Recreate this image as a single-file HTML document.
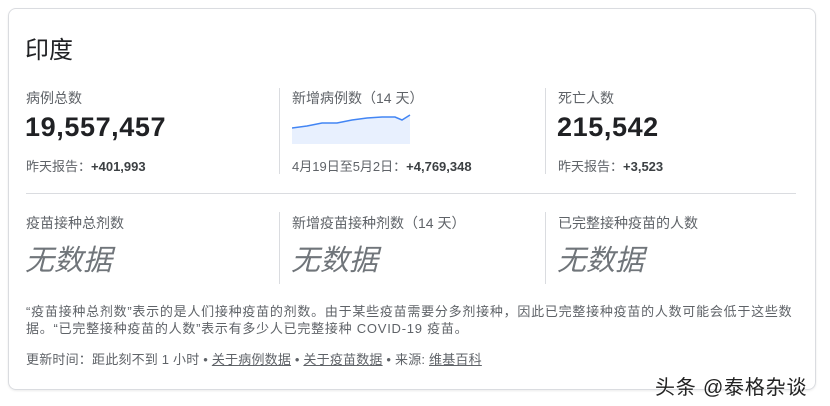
<!DOCTYPE html>
<html><head><meta charset="utf-8"><style>
body{margin:0;width:830px;height:406px;background:#fff;font-family:"Liberation Sans","Noto Sans CJK SC",sans-serif;position:relative;overflow:hidden;color:#202124}
.card{position:absolute;left:8px;top:8px;width:806px;height:380px;border:1px solid #dadce0;border-radius:8px;box-shadow:0 1px 2px rgba(0,0,0,.08)}
.a{position:absolute;white-space:nowrap}
.lab{font-size:14px;color:#5f6368}
.big{font-size:27px;font-weight:700;color:#202124;letter-spacing:0.6px}
.sub{font-size:13px;color:#5f6368}
.sub b{color:#3c4043}
.nd{font-size:29px;font-style:italic;color:#70757a}
.vl{position:absolute;width:1px;background:#dadce0}
.note{font-size:13px;color:#5f6368;line-height:17px;letter-spacing:0.75px}
u{text-decoration:underline}
</style></head><body>
<div class="card"></div>
<div class="a" style="left:25px;top:30px;font-size:24px">印度</div>

<div class="a lab" style="left:26px;top:88px">病例总数</div>
<div class="a big" style="left:25px;top:112px">19,557,457</div>
<div class="a sub" style="left:26px;top:156px">昨天报告：<b>+401,993</b></div>

<div class="vl" style="left:279px;top:88px;height:86px"></div>
<div class="a lab" style="left:292px;top:88px">新增病例数（14 天）</div>
<svg class="a" style="left:292px;top:112px" width="120" height="33"><path d="M0 16 L15 14 L30 11 L45 11 L60 8 L75 6 L90 5 L103 5 L110 8 L118 3 L118 32 L0 32Z" fill="#e8f0fe"/><path d="M0 16 L15 14 L30 11 L45 11 L60 8 L75 6 L90 5 L103 5 L110 8 L118 3" fill="none" stroke="#4285f4" stroke-width="1.5"/></svg>
<div class="a sub" style="left:292px;top:156px">4月19日至5月2日：<b>+4,769,348</b></div>

<div class="vl" style="left:545px;top:88px;height:86px"></div>
<div class="a lab" style="left:558px;top:88px">死亡人数</div>
<div class="a big" style="left:557px;top:112px">215,542</div>
<div class="a sub" style="left:558px;top:156px">昨天报告：<b>+3,523</b></div>

<div class="vl" style="left:26px;top:193px;width:770px;height:1px"></div>

<div class="a lab" style="left:26px;top:213px">疫苗接种总剂数</div>
<div class="a nd" style="left:25px;top:237px">无数据</div>
<div class="vl" style="left:279px;top:212px;height:72px"></div>
<div class="a lab" style="left:292px;top:213px">新增疫苗接种剂数（14 天）</div>
<div class="a nd" style="left:291px;top:237px">无数据</div>
<div class="vl" style="left:545px;top:212px;height:72px"></div>
<div class="a lab" style="left:558px;top:213px">已完整接种疫苗的人数</div>
<div class="a nd" style="left:557px;top:237px">无数据</div>

<div class="a note" style="left:26px;top:303px">“疫苗接种总剂数”表示的是人们接种疫苗的剂数。由于某些疫苗需要分多剂接种，因此已完整接种疫苗的人数可能会低于这些数</div>
<div class="a note" style="left:26px;top:320px">据。“已完整接种疫苗的人数”表示有多少人已完整接种 COVID-19 疫苗。</div>
<div class="a note" style="left:26px;top:351px;letter-spacing:0.2px">更新时间：距此刻不到 1 小时 • <u>关于病例数据</u> • <u>关于疫苗数据</u> • 来源: <u>维基百科</u></div>

<div class="a" style="left:655px;top:371px;font-size:20px;letter-spacing:0.8px;color:#222;text-shadow:0 0 2px #fff">头条 @泰格杂谈</div>
</body></html>
